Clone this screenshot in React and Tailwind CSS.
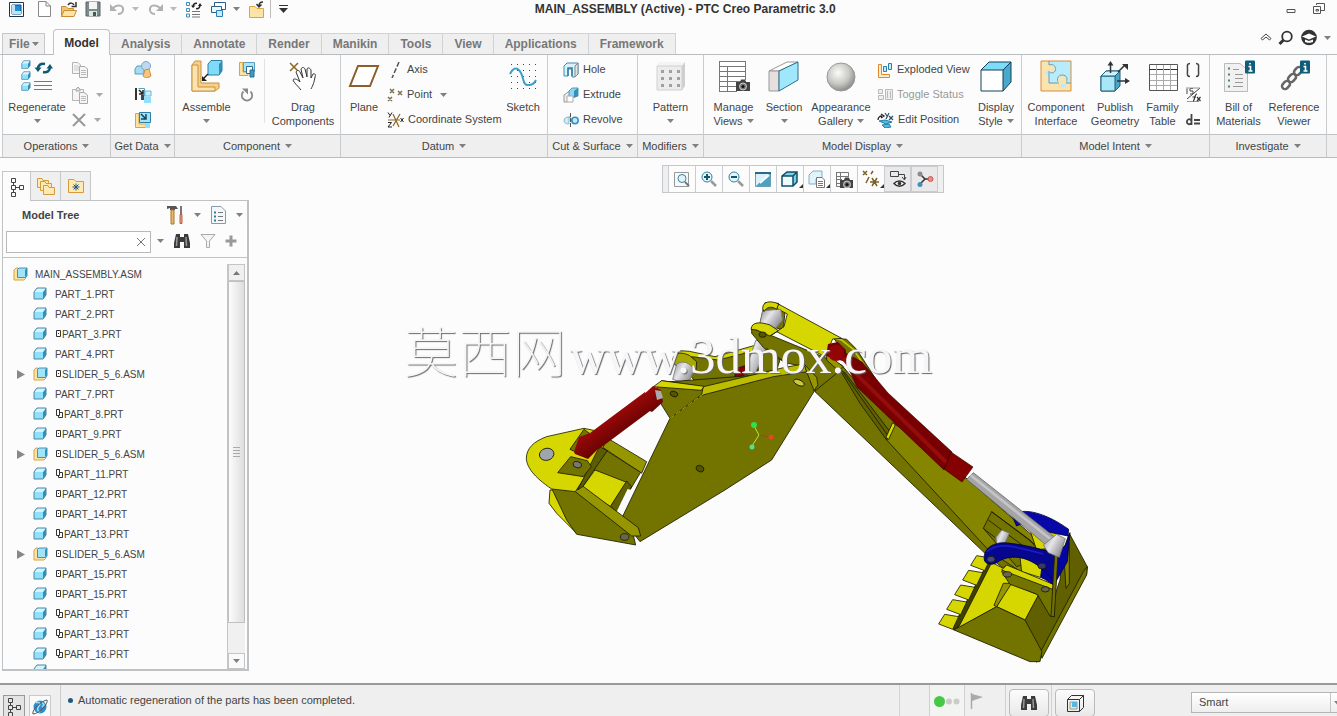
import { useState } from 'react'

const TABS = ['Analysis', 'Annotate', 'Render', 'Manikin', 'Tools', 'View', 'Applications', 'Framework']

const TREE = [
  { name: 'PART_1.PRT' },
  { name: 'PART_2.PRT' },
  { name: 'PART_3.PRT', mark: 'one' },
  { name: 'PART_4.PRT' },
  { name: 'SLIDER_5_6.ASM', mark: 'one', asm: true },
  { name: 'PART_7.PRT' },
  { name: 'PART_8.PRT', mark: 'two' },
  { name: 'PART_9.PRT', mark: 'one' },
  { name: 'SLIDER_5_6.ASM', mark: 'one', asm: true },
  { name: 'PART_11.PRT', mark: 'two' },
  { name: 'PART_12.PRT', mark: 'one' },
  { name: 'PART_14.PRT', mark: 'one' },
  { name: 'PART_13.PRT', mark: 'two' },
  { name: 'SLIDER_5_6.ASM', mark: 'one', asm: true },
  { name: 'PART_15.PRT', mark: 'one' },
  { name: 'PART_15.PRT', mark: 'one' },
  { name: 'PART_16.PRT', mark: 'two' },
  { name: 'PART_13.PRT', mark: 'two' },
  { name: 'PART_16.PRT', mark: 'two' },
]

function Svg({ w = 16, h = w, children }) {
  return (
    <svg width={w} height={h} viewBox={`0 0 ${w} ${h}`} fill="none" className="shrink-0" aria-hidden="true">
      {children}
    </svg>
  )
}

function Caret({ color = '#808080' }) {
  return (
    <Svg w={7} h={4}>
      <path d="M0 0H7L3.500 4Z" fill={color} />
    </Svg>
  )
}

// small part cube, also reused inside larger icons
function Cube({ x = 0, y = 0, s = 1 }) {
  return (
    <g transform={`translate(${x} ${y}) scale(${s})`} strokeLinejoin="round">
      <path d="M1 5L4 1H13V8L10 12H1Z" fill="#8fe0fb" />
      <path d="M10 5L13 1V8L10 12Z" fill="#2f8fb5" />
      <path d="M1 5L4 1H13L10 5Z" fill="#d5f4fd" />
      <path d="M1 5L4 1H13V8L10 12H1Z" stroke="#4a86a5" />
    </g>
  )
}

const PartIcon = () => <Svg w={14}><Cube /></Svg>

const AsmIcon = () => (
  <Svg w={15} h={14}>
    <path d="M1 3L3 1H5V10H13V11L11 13H1Z" fill="#fbe3a6" stroke="#d9a441" />
    <path d="M4.500 2.500L6 1H14V9L12 10.500H4.500Z" fill="#9fe4fb" stroke="#4a8fb0" />
    <path d="M12 3L14 1V8L12 10Z" fill="#2f8fb5" />
  </Svg>
)

const Mark = ({ kind }) => kind === 'one' ? (
  <Svg w={7} h={11}><path d="M1.500 1.500H5.500V7.500H1.500Z" stroke="#333" /><path d="M3 4H4V5H3Z" fill="#333" /></Svg>
) : (
  <Svg w={9} h={10}><path d="M1.500 0.500H4.500V6.500H1.500ZM4.500 3.500H7.500V8.500H3.500V6.500" stroke="#333" /></Svg>
)

const RegenIcon = () => (
  <Svg w={32}>
    <Cube x={0} y={0} s={0.7} /><Cube x={0} y={11} s={0.7} /><Cube x={0} y={22} s={0.7} />
    <path d="M13 21.500H31M13 25.500H31M13 29.500H31" stroke="#777" />
    <path d="M17 9C17 5 20 3 24 4M29 7C29 11 26 13 22 12" stroke="#0d5a75" strokeWidth="2.500" />
    <path d="M13.500 7.500H20.500L17 12ZM25.500 8.500H32L29 4Z" fill="#0d5a75" />
  </Svg>
)

const CopyIcon = () => (
  <Svg w={18}>
    <path d="M1.500 1.500H7L9.500 4V12.500H1.500Z" fill="#f5f5f5" stroke="#b5b5b5" />
    <path d="M3 5H8M3 7H8M3 9H8" stroke="#ccc" />
    <path d="M8.500 5.500H14L16.500 8V16.500H8.500Z" fill="#f5f5f5" stroke="#aaa" />
    <path d="M10 9.500H15M10 11.500H15M10 13.500H15" stroke="#bbb" />
  </Svg>
)

const PasteIcon = () => (
  <Svg w={18}>
    <path d="M1.500 3.500H12.500V14.500H1.500Z" fill="#f5f5f5" stroke="#b5b5b5" />
    <path d="M5 3L7 1L9 3V5H5Z" fill="#ddd" stroke="#aaa" />
    <path d="M8.500 6.500H13L16.500 9V17.500H8.500Z" fill="#f5f5f5" stroke="#aaa" />
    <path d="M10 10.500H15M10 12.500H15M10 14.500H15" stroke="#bbb" />
  </Svg>
)

const DeleteIcon = () => (
  <Svg w={16}><path d="M2 2L14 14M14 2L2 14" stroke="#999" strokeWidth="2" /></Svg>
)

const ShapesIcon = () => (
  <Svg w={18}>
    <path d="M1 8L3 5H10V13H1Z" fill="#a5dcf3" stroke="#5a9fc0" />
    <circle cx="12" cy="5" r="4.500" fill="#bcd9ee" stroke="#7aa6c9" />
    <path d="M11 9L15 8L17 15C15 17 10 17 9 15Z" fill="#f5c67e" stroke="#d08f3c" />
  </Svg>
)

const CopyGeomIcon = () => (
  <Svg w={18}>
    <path d="M2 2V14" stroke="#333" strokeWidth="2" />
    <path d="M4.500 2.500H10.500V10.500" stroke="#5a9fc0" />
    <path d="M5 4L9 8M9 4V8H5" stroke="#222" strokeWidth="1.500" />
    <path d="M7 9H10V14H7Z" fill="#24506b" />
    <path d="M11 5H17V10H11Z" fill="#c9effb" stroke="#69b9d8" />
    <path d="M10 11H17V17H10Z" fill="#8fe0fb" />
  </Svg>
)

const ShrinkIcon = () => (
  <Svg w={18}>
    <path d="M1.500 2.500H5V13H13V16.500H1.500Z" fill="#fbe3a6" stroke="#d9a441" />
    <path d="M5.500 1.500H16.500V11.500H5.500Z" fill="#9fe4fa" stroke="#2c7fa5" />
    <path d="M7 3L12 8M12 3V8H7" stroke="#1d4558" strokeWidth="1.500" />
    <path d="M11 12H16V17H11Z" fill="#8fe0fb" />
  </Svg>
)

const AssembleIcon = () => (
  <Svg w={32}>
    <path d="M1 5L4 1H10V23H28V28L24 31H1Z" fill="#f6d089" stroke="#c9923f" />
    <path d="M1 5H7V27H24V31H1Z" fill="#fbe3b0" stroke="#c9923f" />
    <path d="M17 4L20 0.500H31V11L28 15H17Z" fill="#7fdcf8" stroke="#2c7fa5" />
    <path d="M28 4L31 1V11L28 15Z" fill="#2f8fb5" />
    <path d="M17 14L12 19" stroke="#222" strokeWidth="1.500" />
    <path d="M11 16V21H16Z" fill="#222" />
  </Svg>
)

const CreateIcon = () => (
  <Svg w={18}>
    <path d="M1.500 1.500H5V11H10V14.500H1.500Z" fill="#fbe3a6" stroke="#d9a441" />
    <path d="M5.500 1.500H16.500V10.500H5.500Z" fill="#a9e6fa" stroke="#5a9fc0" />
    <path d="M8.500 5.500H14.500V12.500H8.500Z" fill="#fff" stroke="#2c6f92" />
    <path d="M12 9H16V16H12Z" fill="#3a9cc4" stroke="#2c6f92" />
  </Svg>
)

const RepeatIcon = () => (
  <Svg w={16}>
    <path d="M4.500 4.500A5.200 5.200 0 1 0 11.500 4.500" stroke="#888" strokeWidth="1.700" />
    <path d="M3 1.500H9V7.500Z" fill="#888" />
  </Svg>
)

const DragIcon = () => (
  <Svg w={32}>
    <path d="M3 3L11 11M11 3L3 11" stroke="#8a6420" strokeWidth="1.500" />
    <path d="M14 30C11 26 7 23 6 20C7 18 10 19 13 22L9 12C10 10 12 10 13 12L16 18L14 9C15 7 17 7 18 9L20 17L20 9C21 7 23 8 24 10L24 18L26 14C28 13 29 15 28 17C27 23 26 25 24 29" fill="#fff" stroke="#333" strokeLinejoin="round" />
  </Svg>
)

const PlaneIcon = () => (
  <Svg w={32}>
    <path d="M10 6H30L22 26H2Z" stroke="#8b5e2b" strokeWidth="2" fill="#fff" />
  </Svg>
)

const AxisIcon = () => (
  <Svg w={16}><path d="M12 0L5 16" stroke="#555" strokeWidth="1.500" strokeDasharray="5 2" /></Svg>
)

const PointIcon = () => (
  <Svg w={16}>
    <path d="M3 2L7 6M7 2L3 6M11 4L15 8M15 4L11 8M1 10L5 14M5 10L1 14" stroke="#7d6f50" strokeWidth="1.500" />
  </Svg>
)

const CsysIcon = () => (
  <Svg w={17} h={16}>
    <path d="M6 2L12 15M13 2L6 14M1 8H13" stroke="#8a6420" strokeWidth="1.200" />
    <path d="M1 0.500L3 3.500M5 0.500L2 5.500M1 10.500H4.500L1 15H5M13.500 6L16.500 10M16.500 6L13.500 10" stroke="#222" />
  </Svg>
)

const SketchIcon = () => (
  <Svg w={32}>
    <g stroke="#444" strokeDasharray="1 5">
      <path d="M4 4.500H30M4 10.500H30M4 16.500H30M4 22.500H30M4 28.500H30" />
    </g>
    <path d="M3 14C6 8 10 6 14 13C17 19 16 26 22 25C26 25 28 22 29 20" stroke="#3aa0cc" strokeWidth="2" />
  </Svg>
)

const HoleIcon = () => (
  <Svg w={16}>
    <path d="M1 4L4 1H15V12L12 15H9V7H5V14H1Z" fill="#d8f2fb" stroke="#3a8fb5" />
    <path d="M12 4L15 1V12L12 15Z" fill="#e2e2e2" stroke="#888" />
    <path d="M5 14V6H9V14" stroke="#2b80a8" strokeWidth="1.500" />
  </Svg>
)

const ExtrudeIcon = () => (
  <Svg w={16}>
    <path d="M1 8L8 3V11L4 15H1Z" fill="#eee" stroke="#999" />
    <path d="M6 4L9 1H15V9L11 10H6Z" fill="#8fd6f2" stroke="#4a9fc4" />
    <path d="M11 4L15 1V9L11 11Z" fill="#3a8fb5" />
    <path d="M4 9H10V15H4Z" fill="#fff" stroke="#aaa" />
  </Svg>
)

const RevolveIcon = () => (
  <Svg w={16}>
    <path d="M1 9C1 6 3 5 6 5V12C3 12 1 11 1 9Z" fill="#cfeaf5" stroke="#8bb8cc" />
    <path d="M7.500 1V15" stroke="#555" strokeDasharray="4 1" />
    <circle cx="12" cy="8.500" r="3.200" fill="#bfe9f8" stroke="#3390c0" strokeWidth="1.500" />
    <path d="M6 5C8 5 9 9 10 12" stroke="#3390c0" />
  </Svg>
)

const PatternIcon = () => (
  <Svg w={32}>
    <path d="M2 6L5 2H30V26L27 30H2Z" fill="#cfcfcf" />
    <path d="M2 6L5 2H30L27 6Z" fill="#f4f4f4" />
    <path d="M2 6H27V30H2Z" fill="#ececec" stroke="#d0d0d0" />
    <g stroke="#a0a0a0" strokeWidth="3" strokeDasharray="3 5">
      <path d="M6 11.500H25M6 18.500H25M6 25.500H25" />
    </g>
  </Svg>
)

const Camera = ({ x, y }) => (
  <g transform={`translate(${x} ${y})`}>
    <path d="M0 3H4L5 0.500H9L10 3H14V12H0Z" fill="#444" />
    <circle cx="7" cy="7.500" r="3.500" fill="#777" stroke="#ccc" />
    <circle cx="7" cy="7.500" r="1.500" fill="#111" />
  </g>
)

const ManageViewsIcon = () => (
  <Svg w={34} h={32}>
    <path d="M2.500 1.500H28.500V31.500H2.500Z" fill="#fff" />
    <path d="M2 1.500H29M2 6.500H29M2 11.500H29M2 16.500H29M2 21.500H29M2 26.500H29M2 31.500H20M2.500 1V32M10.500 6V32M28.500 1V20" stroke="#777" />
    <Camera x={19} y={19} />
  </Svg>
)

const SectionIcon = () => (
  <Svg w={32}>
    <path d="M1 11L19 2H30L11 11Z" fill="#fff" stroke="#999" />
    <path d="M1 11H11V31H1Z" fill="#e7dede" stroke="#999" />
    <path d="M11 11L30 2V20L11 31Z" fill="#9fe8fb" stroke="#2b6f8a" />
  </Svg>
)

const SphereIcon = () => (
  <Svg w={32}>
    <defs>
      <radialGradient id="sphere" cx="0.400" cy="0.350" r="0.650">
        <stop offset="0" stopColor="#fbfbf8" />
        <stop offset="0.600" stopColor="#c9c9c5" />
        <stop offset="1" stopColor="#8e8e8a" />
      </radialGradient>
    </defs>
    <circle cx="16" cy="17" r="14" fill="url(#sphere)" stroke="#999" />
  </Svg>
)

const ExplodedIcon = () => (
  <Svg w={16}>
    <path d="M1.500 2.500H4.500V12.500H12.500V15.500H1.500Z" fill="#fdeccb" stroke="#e08a2c" />
    <path d="M6.500 4.500H9.500V9.500H6.500ZM11.500 1.500H14.500V7.500H11.500Z" fill="#c5ecf9" stroke="#2b7fa8" />
  </Svg>
)

const ToggleIcon = () => (
  <Svg w={16}>
    <path d="M1.500 2.500H5.500V6.500H1.500ZM1.500 8.500H6.500V12.500H1.500ZM8.500 2.500H15.500V12.500H8.500Z" fill="#eee" stroke="#bbb" />
    <path d="M10.500 4V11M13.500 4V11" stroke="#bbb" />
  </Svg>
)

const EditPosIcon = () => (
  <Svg w={17} h={16}>
    <path d="M1 8C1 5 3 4 5 4M4 2L7 4L4 6" stroke="#222" strokeWidth="1.300" />
    <path d="M8 1L10 4M12 1L9 7M12 4L16 8M16 4L12 8" stroke="#24506b" strokeWidth="1.200" />
    <path d="M2 9L8 8L15 10L9 12ZM5 13L12 12L14 15L8 16Z" fill="#59b8de" stroke="#1f7fb0" />
  </Svg>
)

const DisplayIcon = () => (
  <Svg w={32}>
    <path d="M1 10L9 2H31L23 10Z" fill="#7fdcf8" />
    <path d="M23 10L31 2V22L23 31Z" fill="#48a9cc" />
    <path d="M1 10H23V31H1Z" fill="#fff" />
    <path d="M1 10L9 2H31V22L23 31H1ZM1 10H23V31M23 10L31 2" stroke="#123f55" />
  </Svg>
)

const ComponentInterfaceIcon = () => (
  <Svg w={32}>
    <path d="M1 1H31V31H1Z" fill="#fbe3b0" />
    <path d="M9 1H31V24H25C28 29 20 29 21 24H9V15C4 17 4 9 9 11Z" fill="#b8ebfb" />
    <path d="M9 1V5C14 3 17 8 15 11C14 14 10 13 9 11V23H19C16 19 18 15 22 15C27 15 28 19 26 23H31" stroke="#6a9dae" />
    <path d="M9 6C14 4 16 8 14 11C13 13 10 12 9 11ZM19 24C17 19 19 16 22 16C26 16 27 19 26 24Z" fill="#fbe3b0" />
    <path d="M1 1H31V31H1Z" stroke="#d98d36" />
  </Svg>
)

const PublishIcon = () => (
  <Svg w={32}>
    <path d="M2 16L7 11H21V26L16 31H2Z" fill="#4aa5c6" stroke="#1d5f7a" />
    <path d="M2 16H16V31H2Z" fill="#a9e6f8" stroke="#1d5f7a" />
    <path d="M2 16L7 11H21L16 16Z" fill="#cff3fc" stroke="#1d5f7a" />
    <path d="M11.500 13V4M19 12L26 5M18 21H27" stroke="#333" strokeWidth="1.500" />
    <path d="M8.500 5.500L11.500 1L14.500 5.500ZM23 4H29V10ZM26 18L31 21L26 24Z" fill="#333" />
  </Svg>
)

const FamilyIcon = () => (
  <Svg w={32}>
    <path d="M2.500 4.500H30.500V30.500H2.500Z" fill="#fff" stroke="#555" />
    <path d="M2 9.500H31" stroke="#333" />
    <path d="M3 14.500H30M3 20.500H30M3 25.500H30M9.500 5V30M16.500 5V30M23.500 5V30" stroke="#aaa" />
  </Svg>
)

const ParenIcon = () => (
  <Svg w={16}>
    <path d="M5 1.500C1.500 1.500 2.500 4 2.500 8S1.500 14.500 5 14.500M11 1.500C14.500 1.500 13.500 4 13.500 8S14.500 14.500 11 14.500" stroke="#444" strokeWidth="1.500" />
  </Svg>
)

const SwitchDimIcon = () => (
  <Svg w={17} h={16}>
    <path d="M2 1.500V7M8 1.500H5V4H8V7H5M15 1L2 12" stroke="#444" />
    <path d="M1 1H15M2 14.500H14" stroke="#999" />
    <path d="M8 14C10 14 9 7 12 7M7.500 10H11M12 10L15.500 14M15.500 10L12 14" stroke="#333" strokeWidth="1.200" />
  </Svg>
)

const RelationsIcon = () => (
  <Svg w={16}>
    <path d="M6.500 2V13M6.500 9.500A2.300 2.500 0 1 0 6.500 10M9 8H15M9 11.500H15" stroke="#444" strokeWidth="1.800" />
  </Svg>
)

const InfoBadge = ({ x }) => (
  <g transform={`translate(${x} 0)`}>
    <rect y="0.500" width="10" height="13" rx="1" fill="#0f5d78" />
    <path d="M5 3V4.500M3.500 6.500H5.500V11M3.500 11H7.500" stroke="#fff" strokeWidth="1.600" />
  </g>
)

const BomIcon = () => (
  <Svg w={32}>
    <path d="M1.500 3.500H17L24.500 10V31.500H1.500Z" fill="#f1f1f1" stroke="#bbb" />
    <path d="M10 9.500H16M12 14.500H20M12 18.500H20M12 22.500H20M10 26.500H20" stroke="#999" />
    <path d="M5 8.500H7M5 14.500H7M5 20.500H7M5 26.500H7" stroke="#4b8d65" strokeWidth="2" />
    <InfoBadge x={22} />
  </Svg>
)

const ChainIcon = () => (
  <Svg w={32}>
    <g stroke="#666" strokeWidth="2.500">
      <rect x="-4.500" y="-3" width="9" height="6" rx="3" transform="translate(8 25) rotate(-48)" />
      <rect x="-4.500" y="-3" width="9" height="6" rx="3" transform="translate(14 18) rotate(-48)" />
      <rect x="-4.500" y="-3" width="9" height="6" rx="3" transform="translate(20 11) rotate(-48)" />
    </g>
    <InfoBadge x={22} />
  </Svg>
)

const TreeIcon = () => (
  <Svg w={16} h={20}>
    <path d="M2.500 1.500H6.500V5.500H2.500ZM2.500 8.500H6.500V12.500H2.500ZM2.500 15.500H6.500V19.500H2.500ZM10.500 8.500H14.500V12.500H10.500ZM4.500 6V8M4.500 13V15M7 10.500H10" stroke="#444" />
  </Svg>
)

const FolderPath = ({ x = 0, y = 0 }) => (
  <path transform={`translate(${x} ${y})`} d="M0.500 1.500H5L6 3.500H11.500V10.500H0.500Z" fill="#fdeab5" stroke="#d99a3d" />
)

const Binoculars = () => (
  <Svg w={18}>
    <path d="M3 2H7V5H11V2H15L17 11V16H11V10H7V16H1V11Z" fill="#3b3b3b" />
    <path d="M4 5L3.500 14M13 5L13.500 14" stroke="#999" strokeWidth="1.500" />
  </Svg>
)

function BigButton({ icon, lines, caret, className }) {
  return (
    <button className={`flex flex-col items-center pt-[5px] shrink-0 leading-[14px] ${className}`}>
      {icon}
      <span className="mt-2 whitespace-nowrap">{lines[0]}</span>
      <span className="flex h-[14px] items-center gap-1 whitespace-nowrap">
        {lines[1]}
        {caret && <Caret />}
      </span>
    </button>
  )
}

function SmallButton({ icon, label, caret, disabled }) {
  return (
    <button disabled={disabled} className="flex h-[25px] items-center gap-1 whitespace-nowrap disabled:text-[#999]">
      {icon}
      {label}
      {caret && <span className={label ? 'ml-1' : 'ml-[3px]'}><Caret color={label ? '#808080' : '#aaa'} /></span>}
    </button>
  )
}

function Group({ title, className, children }) {
  return (
    <section className={`flex shrink-0 flex-col border-r border-[#c9cccf] ${className}`}>
      <div className="flex h-[79px] items-start">{children}</div>
      <button className="flex h-[23px] items-center justify-center gap-[5px] whitespace-nowrap border-t border-[#c0c3c6] bg-[#efefef]">
        {title}
        <Caret />
      </button>
    </section>
  )
}

function QuickAccess() {
  return (
    <div className="flex h-[18px] items-center gap-2 pl-2">
      <button aria-label="Window">
        <Svg w={17}><path d="M1.500 1.500H15.500V15.500H1.500Z" fill="#fff" stroke="#234" /><path d="M4 4H13V13H4Z" fill="#1c8fd6" stroke="#0a4f85" /><path d="M4 4H7V10H13V13H4Z" fill="#bfe4f7" /></Svg>
      </button>
      <button aria-label="New" className="ml-[3px]">
        <Svg w={16} h={18}><path d="M2.500 1.500H10L14.500 6V16.500H2.500Z" fill="#fff" stroke="#888" /><path d="M10 1.500V6H14.500" stroke="#888" /></Svg>
      </button>
      <button aria-label="Open">
        <Svg w={17}><path d="M1.500 5.500H6L8 7.500H13.500V15.500H1.500Z" fill="#f3c46f" stroke="#c98d33" /><path d="M1.500 15.500L4 9.500H16.500L14 15.500Z" fill="#fce3a8" stroke="#c98d33" /><path d="M8 4C10 1 13 2 14 4M16 1V5.500H11.500" stroke="#333" strokeWidth="1.500" /></Svg>
      </button>
      <button aria-label="Save">
        <Svg w={16}><path d="M1 1H15V15H1Z" fill="#7d8b8e" stroke="#5a6568" /><path d="M4 1H12V8H4Z" fill="#f4f4f4" /><path d="M4 10H12V15H4Z" fill="#d6ecd9" /><path d="M8 11H11V15H8Z" fill="#4a5558" /></Svg>
      </button>
      <button aria-label="Undo" className="flex items-center gap-[6px]">
        <Svg w={17} h={16}><path d="M4 7C8 3 15 4 14 9C14 12 11 13 9 13" stroke="#b0b0b0" strokeWidth="2" /><path d="M1 3V10H8Z" fill="#b0b0b0" /></Svg>
        <Caret color="#bbb" />
      </button>
      <button aria-label="Redo" className="flex items-center gap-[6px]">
        <Svg w={17} h={16}><path d="M13 7C9 3 2 4 3 9C3 12 6 13 8 13" stroke="#b0b0b0" strokeWidth="2" /><path d="M16 3V10H9Z" fill="#b0b0b0" /></Svg>
        <Caret color="#bbb" />
      </button>
      <button aria-label="Regenerate">
        <Svg w={17}><path d="M1.500 1.500H4.500V4.500H1.500ZM1.500 7.500H4.500V10.500H1.500ZM1.500 13H4.500V16H1.500Z" stroke="#3a8fb5" /><path d="M7 10.500H15M7 13.500H15M7 16H15" stroke="#777" /><path d="M8 6C8 3 10 2 12 2.500M15 4C15 7 13 8 11 7.500" stroke="#222" strokeWidth="1.500" /><path d="M6 4.500H10.500L8 7ZM13 5H17L15 2Z" fill="#222" /></Svg>
      </button>
      <button aria-label="Windows" className="flex items-center gap-[6px]">
        <Svg w={17}><path d="M4.500 1.500H15.500V8.500H4.500Z" fill="#fff" stroke="#2b5f8a" /><path d="M1.500 5.500H11.500V11.500H1.500Z" fill="#eef7fc" stroke="#2b5f8a" /><path d="M6.500 9.500H12.500V15.500H6.500Z" fill="#c9e9f7" stroke="#2b7fb8" /></Svg>
        <Caret />
      </button>
      <button aria-label="Close window">
        <Svg w={17}><path d="M1.500 5.500H7L9 7.500H15.500V16.500H1.500Z" fill="#fde4a6" stroke="#d9a441" /><path d="M15 1C12 1 11 3 11 5M8.500 3L11 6L13.500 3.500" stroke="#333" strokeWidth="1.500" /></Svg>
      </button>
      <div className="-ml-[3px] h-[18px] border-l border-[#bbb]" />
      <button aria-label="Customize">
        <Svg w={9} h={8}><path d="M0 0.500H9" stroke="#333" /><path d="M0 3H9L4.500 8Z" fill="#333" /></Svg>
      </button>
    </div>
  )
}

function Header() {
  return (
    <header>
      <div className="relative flex h-[29px] items-start">
        <QuickAccess />
        <h1 className="absolute left-[40%] top-[2px] whitespace-nowrap text-[12px] font-bold leading-[14px] text-[#333]">
          MAIN_ASSEMBLY (Active) - PTC Creo Parametric 3.0
        </h1>
        <div className="ml-auto flex items-center gap-4 pr-3 pt-[2px]">
          <button aria-label="Minimize"><Svg w={10} h={12}><path d="M1 7.500H9V10.500H1Z" stroke="#555" /></Svg></button>
          <button aria-label="Restore"><Svg w={13} h={12}><path d="M4.500 3V1.500H12.500V8.500H9M1.500 4.500H8.500V11.500H1.500ZM4 7.500H6.500V9H4Z" stroke="#555" /></Svg></button>
        </div>
      </div>
      <div className="flex h-[25px] items-end">
        <nav className="flex items-end pl-[2px] text-[12px] font-bold text-[#777]">
          <button className="flex h-[21px] w-[43px] items-center gap-[2px] border border-b-0 border-[#c5c8cb] bg-[#efefef] pl-[6px]">
            File <Caret />
          </button>
          <button className="relative z-10 -mb-px ml-2 h-[26px] w-[57px] rounded-t-sm border border-b-0 border-[#c0c3c6] bg-[#fcfcfc] text-[#333]">
            Model
          </button>
          {TABS.map(t => (
            <button key={t} className="h-[21px] border-r border-t border-[#d0d3d6] bg-[#efefef] px-[11px]">{t}</button>
          ))}
        </nav>
        <div className="ml-auto flex items-center gap-[6px] self-start pr-[6px]">
          <button aria-label="Collapse ribbon"><Svg w={12} h={9}><path d="M1 5.500L6 1L11 5.500L9.500 7L6 4L2.500 7Z" stroke="#444" /></Svg></button>
          <button aria-label="Search commands"><Svg w={16}><circle cx="9" cy="6.500" r="4.800" stroke="#333" strokeWidth="1.800" /><path d="M5.500 10L1.500 14" stroke="#333" strokeWidth="3" /></Svg></button>
          <button aria-label="Learning"><Svg w={18} h={17}><circle cx="9" cy="8.500" r="7.800" fill="#333" /><path d="M2 7.500L9 4.500L16 7.500L9 10.500ZM5 10.500V13C7 14 11 14 13 13V10.500L9 12Z" fill="#fff" /></Svg></button>
          <Caret />
        </div>
      </div>
    </header>
  )
}

function Ribbon() {
  return (
    <div className="flex border-y border-[#b9bcbf] pl-[2px]">
      <Group title="Operations" className="w-[109px] border-l">
        <BigButton className="w-[68px]" icon={<RegenIcon />} lines={['Regenerate']} caret />
        <div className="pt-[2px]">
          <SmallButton icon={<CopyIcon />} />
          <SmallButton icon={<PasteIcon />} caret />
          <SmallButton icon={<DeleteIcon />} caret />
        </div>
      </Group>
      <Group title="Get Data" className="w-[64px]">
        <div className="flex w-full flex-col items-center pt-[2px]">
          <SmallButton icon={<ShapesIcon />} />
          <SmallButton icon={<CopyGeomIcon />} />
          <SmallButton icon={<ShrinkIcon />} />
        </div>
      </Group>
      <Group title="Component" className="w-[166px]">
        <BigButton className="w-[63px]" icon={<AssembleIcon />} lines={['Assemble']} caret />
        <div className="mr-2 flex flex-col items-center pt-[2px]">
          <SmallButton icon={<CreateIcon />} />
          <SmallButton icon={<RepeatIcon />} />
        </div>
        <div className="mt-1 h-16 border-l border-[#e2e2e2]" />
        <BigButton className="w-[76px]" icon={<DragIcon />} lines={['Drag', 'Components']} />
      </Group>
      <Group title="Datum" className="w-[207px]">
        <BigButton className="w-[46px]" icon={<PlaneIcon />} lines={['Plane']} />
        <div className="w-[114px] pt-[2px]">
          <SmallButton icon={<AxisIcon />} label="Axis" />
          <SmallButton icon={<PointIcon />} label="Point" caret />
          <SmallButton icon={<CsysIcon />} label="Coordinate System" />
        </div>
        <BigButton className="w-[44px]" icon={<SketchIcon />} lines={['Sketch']} />
      </Group>
      <Group title="Cut & Surface" className="w-[90px]">
        <div className="pl-[15px] pt-[2px]">
          <SmallButton icon={<HoleIcon />} label="Hole" />
          <SmallButton icon={<ExtrudeIcon />} label="Extrude" />
          <SmallButton icon={<RevolveIcon />} label="Revolve" />
        </div>
      </Group>
      <Group title="Modifiers" className="w-[66px]">
        <BigButton className="w-full" icon={<PatternIcon />} lines={['Pattern']} caret />
      </Group>
      <Group title="Model Display" className="w-[318px]">
        <BigButton className="w-[59px]" icon={<ManageViewsIcon />} lines={['Manage', 'Views']} caret />
        <BigButton className="w-[42px]" icon={<SectionIcon />} lines={['Section']} caret />
        <BigButton className="w-[72px]" icon={<SphereIcon />} lines={['Appearance', 'Gallery']} caret />
        <div className="w-[96px] pt-[2px]">
          <SmallButton icon={<ExplodedIcon />} label="Exploded View" />
          <SmallButton icon={<ToggleIcon />} label="Toggle Status" disabled />
          <SmallButton icon={<EditPosIcon />} label="Edit Position" />
        </div>
        <BigButton className="w-[46px]" icon={<DisplayIcon />} lines={['Display', 'Style']} caret />
      </Group>
      <Group title="Model Intent" className="w-[188px]">
        <BigButton className="w-[68px]" icon={<ComponentInterfaceIcon />} lines={['Component', 'Interface']} />
        <BigButton className="w-[50px]" icon={<PublishIcon />} lines={['Publish', 'Geometry']} />
        <BigButton className="w-[45px]" icon={<FamilyIcon />} lines={['Family', 'Table']} />
        <div className="pt-[2px]">
          <SmallButton icon={<ParenIcon />} />
          <SmallButton icon={<SwitchDimIcon />} />
          <SmallButton icon={<RelationsIcon />} />
        </div>
      </Group>
      <Group title="Investigate" className="w-[117px]">
        <BigButton className="w-[57px]" icon={<BomIcon />} lines={['Bill of', 'Materials']} />
        <BigButton className="w-[54px]" icon={<ChainIcon />} lines={['Reference', 'Viewer']} />
      </Group>
      <div className="flex flex-1 flex-col">
        <div className="h-[79px]" />
        <div className="h-[23px] border-t border-[#c0c3c6] bg-[#efefef]" />
      </div>
    </div>
  )
}

function ModelTree() {
  const [query, setQuery] = useState('')

  return (
    <aside className="flex w-[249px] shrink-0 flex-col pb-3 pl-[2px] pt-[13px]">
      <div className="flex">
        <button aria-label="Model tree" className="relative z-10 -mb-px flex h-[30px] w-[29px] items-center justify-center border border-b-0 border-[#c5c8cb] bg-[#fcfcfc]">
          <TreeIcon />
        </button>
        <button aria-label="Folders" className="flex h-[29px] w-[30px] items-center justify-center border-r border-t border-[#c5c8cb] bg-[#efefef]">
          <Svg w={20}><FolderPath x={1} y={1} /><FolderPath x={4} y={4} /><FolderPath x={7} y={8} /></Svg>
        </button>
        <button aria-label="Favorites" className="flex h-[29px] w-[30px] items-center justify-center border-r border-t border-[#c5c8cb] bg-[#efefef]">
          <Svg w={18}><path d="M1.500 2.500H7L9 4.500H16.500V15.500H1.500Z" fill="#fdeab5" stroke="#d99a3d" /><path d="M9 6.500V13.500M5.500 10H12.500M6.500 7.500L11.500 12.500M11.500 7.500L6.500 12.500" stroke="#1c5a80" /></Svg>
        </button>
      </div>
      <div className="flex min-h-0 flex-1 flex-col border-2 border-l border-t border-[#bfc2c5]">
        <div className="flex h-[28px] shrink-0 items-center pl-[19px] pr-1">
          <h2 className="text-[11px] font-bold text-[#444]">Model Tree</h2>
          <div className="ml-auto flex items-center gap-[9px]">
            <button aria-label="Settings">
              <Svg w={19} h={20}><path d="M1 1H10L12 4H9V5H4V3L1 4Z" fill="#555" /><path d="M5 5H8V19H5Z" fill="#e5b96a" stroke="#a9762a" /><path d="M15 1V9" stroke="#777" strokeWidth="2" /><path d="M14 9.500H16V18.500H14Z" fill="#f0a080" stroke="#b5604a" /></Svg>
            </button>
            <Caret />
            <button aria-label="Show">
              <Svg w={17} h={20}><path d="M1.500 1.500H11L15.500 6V18.500H1.500Z" fill="#f3f8fa" stroke="#89a" /><path d="M8 7.500H13M8 11.500H13M8 15.500H13" stroke="#777" /><path d="M4 7.500H6M4 11.500H6M4 15.500H6" stroke="#2b7fa8" strokeWidth="2" /></Svg>
            </button>
            <Caret />
          </div>
        </div>
        <div className="flex h-[29px] shrink-0 items-start gap-[9px] border-b border-[#c0c3c6] pl-[3px] pt-[2px]">
          <div className="flex h-[22px] w-[145px] items-center border border-[#b9b9b9] bg-white">
            <input
              type="text"
              aria-label="Search model tree"
              value={query}
              onChange={e => setQuery(e.target.value)}
              className="min-w-0 flex-1 px-1 outline-none"
            />
            <button aria-label="Clear" onClick={() => setQuery('')} className="pr-1">
              <Svg w={10}><path d="M1 1L9 9M9 1L1 9" stroke="#777" /></Svg>
            </button>
          </div>
          <div className="-ml-[3px] flex h-5 items-center gap-[9px]">
            <Caret />
            <button aria-label="Find"><Binoculars /></button>
            <button aria-label="Filter"><Svg w={16}><path d="M1 1.500H15L9.500 8V14.500H6.500V8Z" fill="#f4f4f4" stroke="#aaa" /></Svg></button>
            <button aria-label="Add"><Svg w={12}><path d="M6 0.500V11.500M0.500 6H11.500" stroke="#999" strokeWidth="3" /></Svg></button>
          </div>
        </div>
        <div className="flex min-h-0 flex-1 pr-[2px] pt-[6px]">
          <ul className="min-w-0 flex-1 overflow-hidden text-[10px] text-[#444]">
            <li className="flex h-5 items-center gap-[7px] pl-[10px]"><AsmIcon />MAIN_ASSEMBLY.ASM</li>
            {TREE.map((row, i) => (
              <li key={i} className="flex h-5 items-center pl-[14px]">
                <span className="w-4">
                  {row.asm && <Svg w={8} h={9}><path d="M0 0L8 4.500L0 9Z" fill="#888" /></Svg>}
                </span>
                <span className="w-[22px]">{row.asm ? <AsmIcon /> : <PartIcon />}</span>
                {row.mark && <Mark kind={row.mark} />}
                {row.name}
              </li>
            ))}
            <li className="h-5 pl-[30px]"><PartIcon /></li>
          </ul>
          <div className="flex w-[18px] flex-col border-l border-[#c5c5c5] bg-[#f0f0f0]">
            <button aria-label="Scroll up" className="flex h-[17px] shrink-0 items-center justify-center border border-[#c5c5c5]"><Svg w={7} h={4}><path d="M0 4H7L3.500 0Z" fill="#777" /></Svg></button>
            <div className="flex min-h-0 grow flex-col">
              <div className="flex basis-[92%] items-center justify-center border border-[#c0c0c0] bg-gradient-to-r from-[#fcfcfc] to-[#dedede]">
                <Svg w={7} h={12}><path d="M0 1.500H7M0 4.500H7M0 7.500H7M0 10.500H7" stroke="#aaa" /></Svg>
              </div>
            </div>
            <button aria-label="Scroll down" className="flex h-[16px] shrink-0 items-center justify-center border border-[#c5c5c5] bg-[#fafafa]"><Caret /></button>
          </div>
        </div>
      </div>
    </aside>
  )
}

const VIEW_TOOLS = [
  { label: 'Refit', art: <><path d="M1.500 2.500H15.500V16.500H1.500Z" fill="#f5fafc" stroke="#999" /><circle cx="9" cy="8.500" r="4" fill="#e3f5fb" stroke="#3b7f9c" /><path d="M12 12L16 16" stroke="#777" strokeWidth="2" /></> },
  { label: 'Zoom in', art: <><circle cx="7" cy="7" r="5" fill="#e3f5fb" stroke="#3b7f9c" /><path d="M4 7H10M7 4V10" stroke="#0d5a75" strokeWidth="2" /><path d="M11 11L16 16" stroke="#999" strokeWidth="2.500" /></> },
  { label: 'Zoom out', art: <><circle cx="7" cy="7" r="5" fill="#e3f5fb" stroke="#3b7f9c" /><path d="M4 7H10" stroke="#0d5a75" strokeWidth="2" /><path d="M11 11L16 16" stroke="#999" strokeWidth="2.500" /></> },
  { label: 'Repaint', art: <><path d="M1.500 2.500H16.500V16.500H1.500Z" fill="#d9f1fa" stroke="#6a9db3" /><path d="M16 3V16H2Z" fill="#4ba3c4" /><path d="M1 3H17" stroke="#276b87" strokeWidth="2" /><path d="M15 5L6 13" stroke="#fff" strokeWidth="2" /></> },
  { label: 'Display style', more: true, art: <><path d="M1 6L6 2H16V12L12 16H1Z" fill="#7fcfe8" /><path d="M1 6H12V16H1Z" fill="#eefafd" /><path d="M1 6L6 2H16V12L12 16H1ZM1 6H12V16M12 6L16 2" stroke="#0f5068" strokeWidth="1.500" /></> },
  { label: 'Saved orientations', more: true, art: <><path d="M1 5L5 1H14V9H8V14H1Z" fill="#dff4fb" stroke="#8ac" /><path d="M8.500 7.500H14L16.500 10V17.500H8.500Z" fill="#fff" stroke="#777" /><path d="M10 11.500H15M10 13.500H15M10 15.500H15" stroke="#777" /></> },
  { label: 'View manager', art: <><path d="M1.500 2.500H13.500V7M1.500 2V16.500H6M1.500 6.500H13M1.500 9.500H7M1.500 13.500H6M5.500 3V16" stroke="#777" /><Camera x={5} y={7} /></> },
  { label: 'Datum display', more: true, art: <path d="M1 1L5 5M5 1L1 5M11 1L9 4M7 7L4 13M8 12H17M10 8L15 16M15 8L10 16" stroke="#7a6125" strokeWidth="1.500" /> },
  { label: 'Annotation display', on: true, art: <><path d="M1.500 1.500H9.500V6.500H1.500ZM10 4.500H15.500V9M13 7L15.500 10L17 7" stroke="#444" /><path d="M5 13.500C8 10 13 10 16 13.500C13 17 8 17 5 13.500Z" fill="#fff" stroke="#333" strokeWidth="1.500" /><circle cx="10.500" cy="13.500" r="1.800" fill="#333" /></> },
  { label: 'Spin center', on: true, art: <><path d="M4 4L9 9H14M9 9L4 14" stroke="#333" strokeWidth="1.500" /><circle cx="4" cy="4" r="2.500" fill="#8b8b8b" /><circle cx="14.500" cy="9" r="2.500" fill="#e8907c" stroke="#c55" /><circle cx="4" cy="14.500" r="2.500" fill="#4a8fb8" /></> },
]

function ViewToolbar() {
  return (
    <div className="flex h-[28px] shrink-0 border border-[#c5c8cb] bg-[#efefef] px-[5px]">
      {VIEW_TOOLS.map(t => (
        <button
          key={t.label}
          aria-label={t.label}
          aria-pressed={Boolean(t.on)}
          className={`relative flex w-[27px] items-center justify-center border-l border-[#c9ccd0] ${t.on ? 'border border-[#888] bg-[#e9e9ea]' : 'bg-[#fcfcfc]'}`}
        >
          <Svg w={18}>{t.art}</Svg>
          {t.more && <span className="absolute bottom-1 right-0"><Svg w={4}><path d="M4 0V4H0Z" fill="#333" /></Svg></span>}
        </button>
      ))}
    </div>
  )
}

const Y = '#d6d600'
const M = '#969600'
const D = '#737300'

function Excavator() {
  return (
    <svg viewBox="249 200 1088 483" className="min-h-0 w-full flex-1" role="img" aria-label="Excavator arm assembly">
      <defs>
        <linearGradient id="red" gradientUnits="userSpaceOnUse" x1="640" y1="365" x2="675" y2="415">
          <stop offset="0" stopColor="#5d0000" /><stop offset="0.400" stopColor="#9b0808" /><stop offset="1" stopColor="#480000" />
        </linearGradient>
        <linearGradient id="rod" x1="0" y1="0" x2="1" y2="0.600">
          <stop offset="0" stopColor="#8c8c8c" /><stop offset="0.450" stopColor="#e6e6ea" /><stop offset="1" stopColor="#8a8a8e" />
        </linearGradient>
      </defs>

      {/* stick */}
      <g transform="translate(660 290) scale(.3333)" stroke="#1c1c00" strokeWidth="2.500" strokeLinejoin="round">
        <path d="M520 143L560 148L590 178L672 305L640 290L560 200Z" fill={D} />
        <path d="M520 143L545 150L580 178L665 303" fill="none" stroke="#c8c800" strokeWidth="5" />
        <path d="M440 235L500 205L545 225L600 290L800 460L1180 800L1060 860L975 790L465 305Z" fill={D} />
        <path d="M700 400L800 462L1150 765L1090 850L990 785L680 450Z" fill="#858500" />
        <path d="M540 240L555 248L690 425L680 450L600 340Z" fill="#606000" />
        <path d="M550 248L686 440" fill="none" />
        <path d="M698 398L706 405L686 448L678 442Z" fill={Y} />
        <circle cx="496" cy="241" r="13" fill="#c9c9b8" />
      </g>

      {/* upper bracket and boom */}
      <g transform="translate(660 290) scale(.3333)" stroke="#1c1c00" strokeWidth="2.500" strokeLinejoin="round">
        <path d="M65 190L165 207L300 165L360 210L350 240L120 292L85 250Z" fill={D} />
        <path d="M45 195L60 182L88 184L165 200L285 166L300 178L175 210L95 200L60 215Z" fill={Y} />
        <path d="M225 237L290 215L296 240L225 265Z" fill="#850000" />
        <path d="M288 150L322 165L287 248L252 252Z" fill="url(#rod)" stroke="#777" />
        <path d="M310 55L315 38L355 40L375 65L370 120L300 100Z" fill={D} />
        <path d="M355 42L545 145L518 147L495 200L350 125L372 110L382 72L350 55Z" fill={Y} />
        <path d="M308 62L362 58L368 90L345 117L300 100Z" fill="url(#rod)" stroke="#777" />
        <path d="M308 55C308 35 330 30 356 42L350 58C335 48 320 50 312 65Z" fill={Y} />
        <path d="M275 115L330 135L500 205L540 242L465 303L440 232L375 218L310 172L275 130Z" fill={D} />
        <path d="M500 192L550 230L535 242L500 210Z" fill={M} />
        <path d="M273 118C275 95 300 95 330 105L355 122L330 138L290 120Z" fill={Y} />
        <ellipse cx="308" cy="134" rx="11" ry="8" fill="#555500" />
        <path d="M320 175L375 218M330 138L355 122" />
        <path d="M38 210C40 190 60 183 88 196L110 215L108 245L60 235L42 222Z" fill="#a8a800" />
        <path d="M50 222C70 210 90 218 102 240L85 282L38 268Z" fill="url(#rod)" stroke="#777" />
        <path d="M20 276L125 293L130 312L30 385L-115 685L-60 755L195 600L335 510L465 300L455 255L430 245Z" fill={D} />
        <path d="M122 292L375 232L432 222L440 245L340 260L125 316Z" fill="#bdbd00" />
        <path d="M432 222L470 262L474 285L462 302L440 245Z" fill={M} />
        <path d="M-10 295L5 272L130 290L125 313L30 385L5 345Z" fill={D} />
        <path d="M-20 290L5 272L132 289L124 301Z" fill={Y} />
        <path d="M30 385L130 312" strokeDasharray="16 6" stroke="#b8b800" />
        <ellipse cx="42" cy="312" rx="12" ry="8" fill="#555500" transform="rotate(20 42 312)" />
        <ellipse cx="417" cy="278" rx="17" ry="8" fill="#c9c940" transform="rotate(25 417 278)" />
        <ellipse cx="120" cy="536" rx="12" ry="9" fill="#555500" transform="rotate(20 120 536)" />
      </g>

      {/* upper hydraulic cylinder */}
      <g strokeWidth="0.600" stroke="#300">
        <path d="M828 344L838 342L846 350L846 362L826 356Z" fill="#7a0000" stroke="none" />
        <path d="M840 350L862 362L888 393L952 452L944 470L857 387Z" fill="#780000" />
        <path d="M843 358L860 378L947 463" stroke="#930d0d" strokeWidth="4" fill="none" />
        <circle cx="836" cy="353" r="8" fill="#930505" stroke="none" />
        <path d="M951 452L973 467L962 482L944 469Z" fill="#850000" />
      </g>

      {/* left link */}
      <g transform="translate(400 290) scale(.3333)" stroke="#1c1c00" strokeWidth="2.500" strokeLinejoin="round">
        <path d="M590 425L740 515L725 550L605 470Z" fill={M} />
        <path d="M600 470L722 547L690 600L665 575L595 555L575 530Z" fill={D} />
        <path d="M585 540L680 577L632 650L545 595Z" fill={Y} />
        <path d="M680 573L695 590L650 668L632 648Z" fill="#606000" />
        <path d="M683 597L696 600L668 675L650 665Z" fill="#fcfcfc" stroke="none" />
        <path d="M450 600L460 600L530 730L470 670L447 640Z" fill={Y} />
        <path d="M455 595L530 603L700 735L707 765L530 733L500 690Z" fill={D} />
        <path d="M540 582L715 713L722 738L695 738L526 605Z" fill={M} />
        <path d="M552 415L440 440C400 455 380 475 379 505C380 530 400 560 455 597L526 605L595 500L620 450L600 425Z" fill={Y} />
        <path d="M598 470L622 482L548 590L533 600Z" fill="#5c5c00" />
        <path d="M552 418L582 440L525 485L510 478Z" fill={D} />
        <path d="M512 500L562 512L574 530L550 560L473 548Z" fill={D} />
        <ellipse cx="440" cy="493" rx="22" ry="18" fill="#9fa5ad" transform="rotate(-15 440 493)" />
        <ellipse cx="532" cy="524" rx="13" ry="9" fill="#777" transform="rotate(15 532 524)" />
        <ellipse cx="674" cy="741" rx="13" ry="10" fill="#666650" />
      </g>
      <g fill="url(#red)">
        <path d="M590 433L645 392L654 408L599 449Z" />
        <path d="M641 397L653 386L661 390L663 402L652 412L645 409Z" />
        <path d="M574 452L579 437L590 433L600 447L588 459L575 454Z" />
      </g>
      <path d="M655 390L661 391L663 398L657 400Z" fill="#aaa" />

      {/* bucket */}
      <g transform="translate(830 450) scale(.3333)" stroke="#1c1c00" strokeWidth="2.500" strokeLinejoin="round">
        <path d="M485 185L600 270L640 320L560 350L460 235Z" fill={D} />
        <path d="M485 185L630 295M475 210L610 310M460 235L530 290" fill="none" />
        <path d="M600 240L680 240L690 290L620 300Z" fill={Y} />
        <path d="M718 250L772 350L770 372L635 620L620 637L585 510L625 435L660 480L690 390L700 300Z" fill="#606000" />
        <path d="M772 350L760 365L632 605L636 625L770 375Z" fill={D} />
        <path d="M545 195C580 170 650 190 716 238L714 258L650 245L585 217L560 228Z" fill="#0808a8" stroke="#000038" />
        <path d="M498 262L515 240L538 250L520 290L500 285Z" fill="url(#rod)" stroke="#777" />
        <path d="M570 320L640 345L640 385L575 365Z" fill={Y} />
        <path d="M480 335L520 355L545 400L500 470L380 537Z" fill={Y} />
        <path d="M540 400L625 435L585 510L500 470Z" fill={Y} />
        <path d="M500 470L585 510L636 605L630 635L600 635L372 540Z" fill={D} />
        <path d="M520 400L545 400L500 470L492 466Z" fill={M} />
        <path d="M478 330L484 340L388 528L370 540L374 520Z" fill="#3f3f00" />
        <path d="M515 365L525 348L670 405L673 500L660 498L622 433L540 403Z" fill={D} />
        <path d="M515 360L530 345L672 404L668 418Z" fill={Y} />
        <path d="M700 290L718 280V400L708 415Z" fill="#858500" />
        {[0, 1, 2, 3, 4].map(i => (
          <path key={i} transform={`translate(${i * -24} ${i * 44})`} d="M440 317L482 324L464 362L422 346Z" fill={Y} />
        ))}
        <path d="M410 88L430 68L675 262L652 288Z" fill="#a5a5a8" stroke="#666" />
        <path d="M422 76L665 270" stroke="#c5c5c8" strokeWidth="8" fill="none" />
        <path d="M632 380L640 320L705 290L720 248L712 335L672 405Z" fill="#0505a0" stroke="#000038" />
        <path d="M463 330C458 290 500 272 540 280C590 285 640 300 678 310L675 400L660 380L628 350C590 320 540 310 500 338C485 346 467 344 463 330Z" fill="#06068f" stroke="#000038" />
        <path d="M470 305C500 278 540 284 640 312" stroke="#1b1bc4" strokeWidth="5" fill="none" />
        <path d="M674 312L684 318L673 500L663 500Z" fill="#707000" />
        <path d="M640 285L680 253L706 266L688 322L655 308Z" fill="url(#rod)" stroke="#777" />
        <ellipse cx="483" cy="328" rx="12" ry="9" fill="#444a80" />
        <ellipse cx="636" cy="348" rx="12" ry="9" fill="#333a70" />
        <ellipse cx="532" cy="373" rx="13" ry="8" fill="#666650" />
        <ellipse cx="646" cy="418" rx="12" ry="8" fill="#666650" />
      </g>

      {/* spin centre */}
      <path d="M754 426L759 435L752 446" fill="none" stroke="#b5e84a" />
      <path d="M759 435L770 437" stroke="#a04a10" />
      <circle cx="754" cy="425" r="3" fill="#2fe04a" />
      <circle cx="771" cy="437" r="2.500" fill="#e04a20" />
      <circle cx="752" cy="447" r="2.500" fill="#4fe0a0" />
    </svg>
  )
}

function Viewport() {
  return (
    <main className="relative flex min-w-0 flex-1 flex-col items-center pt-[7px]">
      <div className="pl-[20px]"><ViewToolbar /></div>
      <div className="h-[7px] shrink-0" />
      <Excavator />
      <p className="absolute left-[155px] top-[152px] flex items-baseline gap-1 whitespace-nowrap leading-[80px] text-[#f6f6f8] [text-shadow:1px_1px_1px_#666]">
        <span className="font-['Noto_Sans_CJK_SC',sans-serif] text-[54px] font-thin">莫西网</span>
        <span className="font-['Liberation_Serif',serif] text-[51px]">www.3dmox.com</span>
      </p>
    </main>
  )
}

function StatusBar() {
  return (
    <footer className="flex h-[33px] shrink-0 items-start overflow-hidden border-t-2 border-[#999] bg-[#efefef] pl-[3px]">
      <button aria-label="Toggle navigator" className="mt-[10px] flex h-[24px] w-[22px] shrink-0 items-center justify-center border border-[#999] bg-[#e4e4e4]"><TreeIcon /></button>
      <button aria-label="Toggle browser" className="ml-1 mt-[10px] flex h-[24px] w-[22px] shrink-0 items-center justify-center border border-[#c9c9c9] bg-[#fafafa]">
        <Svg w={18}><circle cx="9" cy="9" r="6.500" fill="#2a8fd0" /><path d="M5 5C8 3 10 6 8 8C6 10 6 13 9 14M11 4L13 7L11 9" stroke="#a5dff5" strokeWidth="1.500" /><path d="M2 16C0 12 12 2 16 2C18 5 8 16 2 16Z" stroke="#555" /></Svg>
      </button>
      <div className="ml-[9px] h-8 border-l border-[#ccc]" />
      <p className="flex items-center gap-[5px] whitespace-nowrap pl-[7px] pt-2 leading-[14px] text-[#444]">
        <Svg w={5}><circle cx="2.500" cy="2.500" r="2.500" fill="#1f5a80" /></Svg>
        Automatic regeneration of the parts has been completed.
      </p>
      <div className="ml-auto flex shrink-0 items-start">
        <div className="h-8 w-[30px] border-l border-[#d5d5d5]" />
        <div className="flex h-8 w-[36px] items-center justify-center border-x border-[#d0d0d0] bg-[#f1f4f1]">
          <Svg w={26} h={11}><circle cx="5.500" cy="5.500" r="5.500" fill="#45c945" /><circle cx="15" cy="5.500" r="3" fill="#c9ccc9" /><circle cx="22.500" cy="5.500" r="3" fill="#c9ccc9" /></Svg>
        </div>
        <div className="flex h-8 w-[41px] items-center border-r border-[#d0d0d0] pl-[5px]">
          <Svg w={14} h={18}><path d="M1.500 1V17" stroke="#aaa" strokeWidth="1.500" /><path d="M2 2L13 5L2 9Z" fill="#aaa" /></Svg>
        </div>
        <button aria-label="Find" className="ml-[3px] mt-[4px] flex h-[28px] w-[40px] items-center justify-center rounded-sm border border-[#bbb] bg-gradient-to-b from-[#fcfcfc] to-[#e8e8e8]"><Binoculars /></button>
        <div className="ml-[2px] h-8 border-l border-[#d0d0d0]" />
        <button aria-label="Selection" className="ml-[3px] mt-[4px] flex h-[28px] w-[40px] items-center justify-center rounded-sm border border-[#bbb] bg-gradient-to-b from-[#fcfcfc] to-[#e8e8e8]">
          <Svg w={19}><path d="M1.500 5.500L5.500 1.500H17.500V13.500L13.500 17.500H1.500ZM1.500 5.500H13.500V17.500M13.500 5.500L17.500 1.500" stroke="#333" /><path d="M4 8H11V15H4Z" fill="#f8e7b4" stroke="#999" /><path d="M6 8H11V13H6Z" fill="#5ab8e0" /></Svg>
        </button>
        <div className="-mr-1 ml-24 mt-[7px] flex h-[21px] w-[150px] items-center border border-[#b5b5b5] bg-gradient-to-b from-white to-[#eeeeee]">
          <select aria-label="Selection filter" className="h-full flex-1 appearance-none bg-transparent pl-[7px] outline-none">
            <option>Smart</option>
          </select>
          <span className="flex h-full w-[10px] items-center border-l border-[#c5c5c5] pl-[3px]"><Caret /></span>
        </div>
      </div>
    </footer>
  )
}

export default function App() {
  return (
    <div className="flex h-screen flex-col overflow-hidden bg-[#fcfcfc] font-['Liberation_Sans',Arial,sans-serif] text-[11px] text-[#444]">
      <Header />
      <Ribbon />
      <div className="flex min-h-0 flex-1">
        <ModelTree />
        <Viewport />
      </div>
      <StatusBar />
    </div>
  )
}
